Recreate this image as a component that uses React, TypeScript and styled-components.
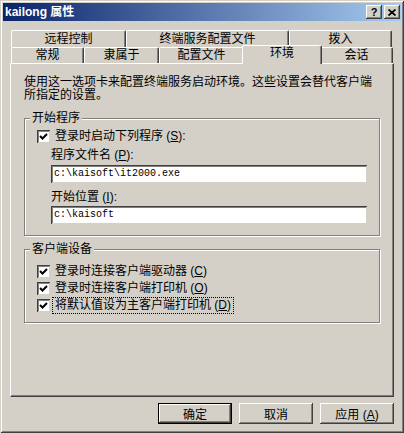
import styled, { createGlobalStyle, css } from 'styled-components';

const GlobalStyle = createGlobalStyle`
	html, body { margin: 0; padding: 0; background: #d4d0c8; }
	body {
		font-family: 'Liberation Sans', 'Noto Sans CJK SC', sans-serif;
		font-size: 12px;
		color: #000;
	}
`;

const raised = css`
	box-shadow: inset -1px -1px 0 #404040, inset 1px 1px 0 #fff, inset -2px -2px 0 #808080;
`;

const sunken = css`
	box-shadow: inset 1px 1px 0 #404040, inset -1px -1px 0 #d4d0c8, inset 2px 2px 0 #808080, inset -2px -2px 0 #fff;
`;

const Window = styled.div`
	width: 404px;
	height: 433px;
	box-sizing: border-box;
	padding: 3px;
	background: #d4d0c8;
	box-shadow: inset 1px 1px 0 #d4d0c8, inset -1px -1px 0 #404040, inset 2px 2px 0 #fff, inset -2px -2px 0 #808080;
	display: flex;
	flex-direction: column;
`;

const TitleBar = styled.div`
	height: 18px;
	display: flex;
	align-items: center;
	padding: 0 1px 0 2px;
	background: linear-gradient(to right, #0a246a, #a6caf0);
	color: #fff;
	font-weight: bold;
	font-size: 12px;
`;

const Title = styled.span`
	flex: 1;
	line-height: 18px;
`;

const CapButton = styled.div`
	width: 16px;
	height: 14px;
	box-sizing: border-box;
	background: #d4d0c8;
	color: #000;
	display: flex;
	align-items: center;
	justify-content: center;
	font-size: 11px;
	font-weight: bold;
	margin-left: 2px;
	${raised}
`;

const Body = styled.div`
	padding: 9px 7px 0 7px;
	display: flex;
	flex-direction: column;
`;

const TabRow = styled.div<{ $h: number }>`
	display: flex;
	margin-left: 1px;
	height: ${(p) => p.$h}px;
`;

const Tab = styled.div<{ $w: number; $active?: boolean }>`
	width: ${(p) => p.$w}px;
	flex: none;
	box-sizing: border-box;
	background: #d4d0c8;
	border-top: 1px solid #fff;
	border-left: 1px solid #fff;
	border-right: 1px solid #404040;
	border-radius: 2px 2px 0 0;
	box-shadow: inset -1px 0 0 #808080;
	display: flex;
	align-items: center;
	justify-content: center;
	line-height: 13px;
	${(p) =>
		p.$active &&
		css`
			position: relative;
			z-index: 1;
			height: 19px;
			margin: -2px -2px 0 -2px;
			padding-bottom: 4px;
		`}
`;

const Panel = styled.div`
	width: 384px;
	height: 334px;
	box-sizing: border-box;
	border-top: 1px solid #fff;
	border-left: 1px solid #fff;
	border-right: 1px solid #404040;
	border-bottom: 1px solid #404040;
	box-shadow: inset -1px -1px 0 #808080;
	padding: 12px 0 0 13px;
`;

const Desc = styled.p`
	margin: 0;
	line-height: 13px;
`;

const Group = styled.fieldset<{ $mt: number }>`
	margin: ${(p) => p.$mt}px 0 0 0;
	padding: 0;
	width: 356px;
	box-sizing: border-box;
	min-inline-size: auto;
	border: 1px solid #808080;
	box-shadow: inset 1px 1px 0 #fff, 1px 1px 0 #fff;
`;

const Legend = styled.legend`
	margin-left: 5px;
	padding: 0 2px;
	line-height: 13px;
	background: #d4d0c8;
`;

const GroupBody = styled.div<{ $pt: number; $pb: number }>`
	padding: ${(p) => p.$pt}px 0 ${(p) => p.$pb}px 12px;
	display: flex;
	flex-direction: column;
	gap: 4px;
`;

const CheckRow = styled.div`
	display: flex;
	align-items: center;
	gap: 4px;
	height: 13px;
	line-height: 13px;
`;

const Box = styled.span`
	width: 13px;
	height: 13px;
	flex: none;
	box-sizing: border-box;
	background: #fff;
	display: flex;
	align-items: center;
	justify-content: center;
	${sunken}
`;

const CheckLabel = styled.span<{ $focus?: boolean }>`
	padding: 0 1px;
	${(p) =>
		p.$focus &&
		css`
			outline: 1px dotted #000;
			outline-offset: 1px;
		`}
`;

const Indent = styled.div`
	margin-left: 14px;
	display: flex;
	flex-direction: column;
`;

const FieldLabel = styled.div<{ $mt: number }>`
	margin-top: ${(p) => p.$mt}px;
	line-height: 13px;
`;

const TextBox = styled.div<{ $mt: number }>`
	margin-top: ${(p) => p.$mt}px;
	width: 316px;
	height: 18px;
	box-sizing: border-box;
	padding: 0 3px;
	background: #fff;
	font-family: 'Liberation Mono', monospace;
	font-size: 10px;
	line-height: 18px;
	${sunken}
`;

const Buttons = styled.div`
	margin-top: 6px;
	display: flex;
	justify-content: flex-end;
	gap: 7px;
`;

const Button = styled.button<{ $default?: boolean }>`
	width: 74px;
	height: 21px;
	padding: 0;
	font: inherit;
	color: #000;
	background: #d4d0c8;
	border: none;
	${raised}
	${(p) =>
		p.$default &&
		css`
			border: 1px solid #000;
		`}
`;

const U = styled.span`
	text-decoration: underline;
`;

function Check() {
	return (
		<Box>
			<svg width='9' height='9' viewBox='0 0 9 9'>
				<polyline points='1,4 3.5,6.5 8,2' fill='none' stroke='#000' strokeWidth='2' />
			</svg>
		</Box>
	);
}

export default function App() {
	return (
		<>
			<GlobalStyle />
			<Window>
				<TitleBar>
					<Title>kailong 属性</Title>
					<CapButton>?</CapButton>
					<CapButton>
						<svg width='8' height='7' viewBox='0 0 8 7'>
							<path d='M0.5 0.5 L7.5 6.5 M7.5 0.5 L0.5 6.5' stroke='#000' strokeWidth='1.7' />
						</svg>
					</CapButton>
				</TitleBar>
				<Body>
					<TabRow $h={17}>
						<Tab $w={115}>远程控制</Tab>
						<Tab $w={163}>终端服务配置文件</Tab>
						<Tab $w={103}>拨入</Tab>
					</TabRow>
					<TabRow $h={16}>
						<Tab $w={73}>常规</Tab>
						<Tab $w={75}>隶属于</Tab>
						<Tab $w={85}>配置文件</Tab>
						<Tab $w={80} $active>
							环境
						</Tab>
						<Tab $w={73}>会话</Tab>
					</TabRow>
					<Panel>
						<Desc>
							使用这一选项卡来配置终端服务启动环境。这些设置会替代客户端
							<br />
							所指定的设置。
						</Desc>
						<Group $mt={10}>
							<Legend>开始程序</Legend>
							<GroupBody $pt={5} $pb={11}>
								<CheckRow>
									<Check />
									<CheckLabel>
										登录时启动下列程序 (<U>S</U>):
									</CheckLabel>
								</CheckRow>
								<Indent>
									<FieldLabel $mt={2}>
										程序文件名 (<U>P</U>):
									</FieldLabel>
									<TextBox $mt={3}>c:\kaisoft\it2000.exe</TextBox>
									<FieldLabel $mt={8}>
										开始位置 (<U>I</U>):
									</FieldLabel>
									<TextBox $mt={2}>c:\kaisoft</TextBox>
								</Indent>
							</GroupBody>
						</Group>
						<Group $mt={7}>
							<Legend>客户端设备</Legend>
							<GroupBody $pt={9} $pb={10}>
								<CheckRow>
									<Check />
									<CheckLabel>
										登录时连接客户端驱动器 (<U>C</U>)
									</CheckLabel>
								</CheckRow>
								<CheckRow>
									<Check />
									<CheckLabel>
										登录时连接客户端打印机 (<U>O</U>)
									</CheckLabel>
								</CheckRow>
								<CheckRow>
									<Check />
									<CheckLabel $focus>
										将默认值设为主客户端打印机 (<U>D</U>)
									</CheckLabel>
								</CheckRow>
							</GroupBody>
						</Group>
					</Panel>
					<Buttons>
						<Button $default>确定</Button>
						<Button>取消</Button>
						<Button>
							应用 (<U>A</U>)
						</Button>
					</Buttons>
				</Body>
			</Window>
		</>
	);
}
